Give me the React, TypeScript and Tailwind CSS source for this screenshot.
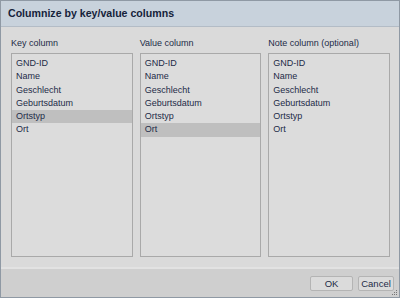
import React from 'react'

const rows = ['GND-ID', 'Name', 'Geschlecht', 'Geburtsdatum', 'Ortstyp', 'Ort']

const columns = [
  { label: 'Key column', selected: 'Ortstyp' },
  { label: 'Value column', selected: 'Ort' },
  { label: 'Note column (optional)', selected: '' },
]

function ListBox({ selected }: { selected: string }) {
  return (
    <div className="flex-1 border border-[#a9a9a9] bg-[#dcdcdc] pt-[3px]">
      {rows.map((r) => (
        <div
          key={r}
          className={`h-[13.3px] leading-[13.3px] pl-[4px] ${r === selected ? 'bg-[#bfbfbf]' : ''}`}
        >
          {r}
        </div>
      ))}
    </div>
  )
}

export default function App() {
  return (
    <div
      className="relative w-[400px] h-[298px] flex flex-col bg-[#dadada] border border-[#8f99a4] text-[#1d2b47] overflow-hidden"
      style={{ fontFamily: '"Liberation Sans", Arial, sans-serif' }}
    >
      {/* Title bar */}
      <div className="h-[26px] shrink-0 flex items-center px-[7px] bg-[#c8d2dc] border-b border-[#b3bcc6] text-[10.6px] font-bold text-[#15223a]">
        Columnize by key/value columns
      </div>

      {/* Body */}
      <div className="flex-1 grid grid-cols-3 gap-[7px] pl-[10px] pr-[9px] pt-[10px] pb-[10px] text-[9px]">
        {columns.map((c) => (
          <div key={c.label} className="flex flex-col">
            <div className="h-[16px] leading-[12px] text-[9px]">{c.label}</div>
            <ListBox selected={c.selected} />
          </div>
        ))}
      </div>

      {/* Footer */}
      <div className="h-[30px] shrink-0 flex items-center justify-end gap-[5px] pr-[5px] bg-[#cfcfcf] border-t-2 border-[#e2e2e2]">
        <button className="w-[43px] h-[15px] leading-[13px] text-[9.5px] bg-[#dbdbdb] border border-[#b4b4b4] rounded-[2px] text-[#1d2b47]">
          OK
        </button>
        <button className="w-[36px] h-[15px] leading-[13px] text-[9.5px] bg-[#dbdbdb] border border-[#b4b4b4] rounded-[2px] text-[#1d2b47]">
          Cancel
        </button>
      </div>

      {/* Resize grip */}
      <svg className="absolute right-[1px] bottom-[1px]" width="6" height="6" viewBox="0 0 6 6">
        <rect x="4" y="0" width="1" height="1" fill="#777" />
        <rect x="2" y="2" width="1" height="1" fill="#777" />
        <rect x="4" y="2" width="1" height="1" fill="#777" />
        <rect x="0" y="4" width="1" height="1" fill="#777" />
        <rect x="2" y="4" width="1" height="1" fill="#777" />
        <rect x="4" y="4" width="1" height="1" fill="#777" />
      </svg>
    </div>
  )
}
